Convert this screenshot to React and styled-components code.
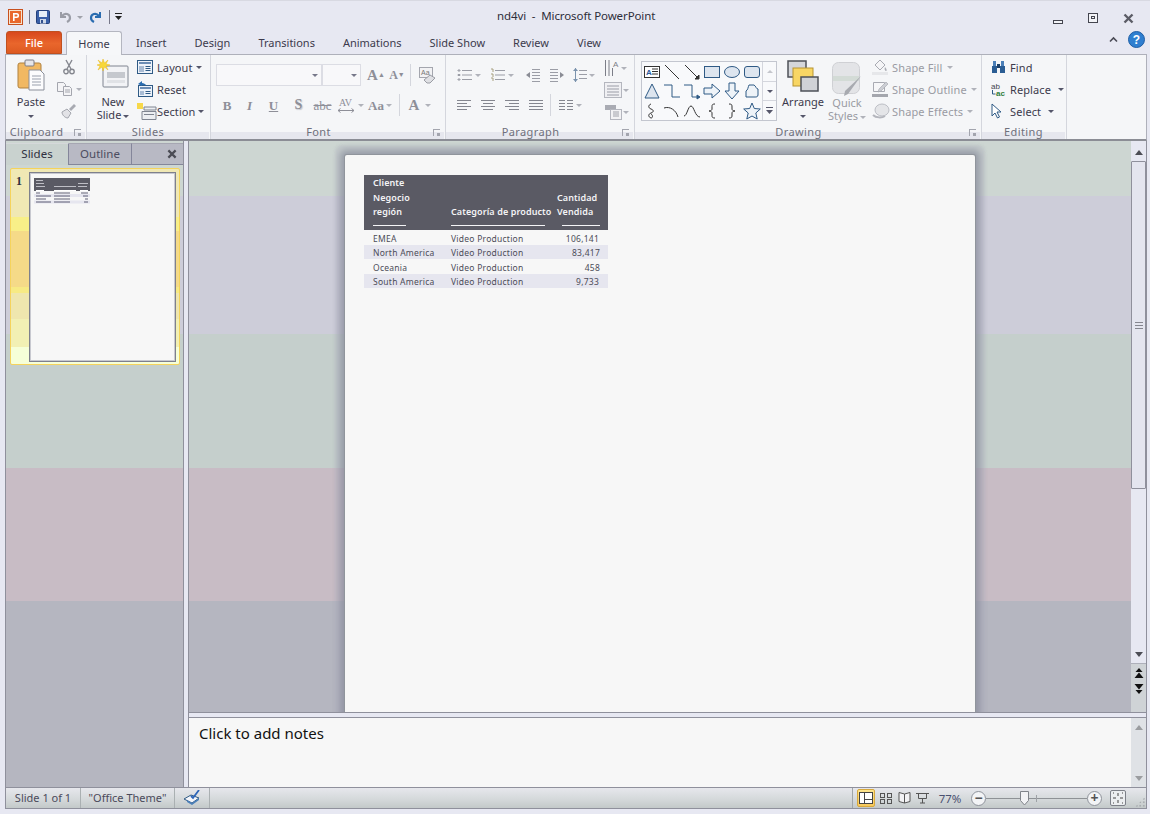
import React from 'react';
import styled, { createGlobalStyle } from 'styled-components';

const Global = createGlobalStyle`
  html, body { margin: 0; padding: 0; background: #e7e8f2; }
  * { box-sizing: border-box; }
`;

const Window = styled.div`
  width: 1150px;
  height: 814px;
  display: flex;
  flex-direction: column;
  overflow: hidden;
  background: #e7e8f2;
  font-family: "Noto Sans", "Open Sans", sans-serif;
  font-size: 11px;
  color: #3c3a4c;
`;

/* title bar */
const TitleBar = styled.div`
  height: 31px;
  display: flex;
  align-items: center;
  padding: 2px 0 0 8px;
  border-top: 1px solid #d8d9e2;
`;
const Quick = styled.div`
  display: flex;
  align-items: center;
  width: 489px;
`;
const QuickSep = styled.span`
  width: 1px;
  height: 14px;
  background: ${p => (p.$clear ? 'transparent' : '#77788a')};
  margin: ${p => p.$m || '0 6px'};
`;
const Title = styled.div`
  font-size: 11.5px;
  letter-spacing: -0.1px;
  color: #2e2e3a;
  width: 180px;
  white-space: pre;
  margin-top: -4px;
`;
const WinButtons = styled.div`
  margin-left: auto;
  display: flex;
  align-items: center;
  padding: 2px 16px 0 0;
  gap: 24px;
`;

/* tabs */
const TabBar = styled.div`
  height: 23px;
  display: flex;
  align-items: flex-end;
  padding-left: 6px;
`;
const FileTab = styled.div`
  width: 56px;
  height: 23px;
  margin-right: 4px;
  border-radius: 3px 3px 0 0;
  background: linear-gradient(#d8481d, #e9662c 55%, #dd5a22);
  border: 1px solid #c0501f;
  color: #fff;
  font-weight: 500;
  display: flex;
  align-items: center;
  justify-content: center;
`;
const Tab = styled.div`
  height: ${p => (p.$active ? '24px' : '23px')};
  width: ${p => (p.$active ? '56px' : 'auto')};
  margin-bottom: ${p => (p.$active ? '-1px' : '0')};
  padding: 0 ${p => (p.$active ? '0' : '14px')};
  display: flex;
  align-items: center;
  justify-content: center;
  white-space: nowrap;
  z-index: 1;
  ${p => p.$active && `
    background: #f6f7f9;
    border: 1px solid #b4b6c0;
    border-bottom: none;
    border-radius: 3px 3px 0 0;
  `}
`;
const TabRight = styled.div`
  margin-left: auto;
  display: flex;
  align-items: center;
  gap: 10px;
  padding: 0 5px 6px 0;
`;

/* ribbon */
const Ribbon = styled.div`
  height: 87px;
  margin: 0 3px 0 5px;
  display: flex;
  background: #f5f6f8;
  border: 1px solid #aeb0ba;
  border-bottom: 2px solid #8b8d95;
`;
const Group = styled.div`
  width: ${p => p.$w}px;
  flex: none;
  display: flex;
  flex-direction: column;
  border-right: 1px solid #d4d6dd;
  position: relative;
`;
const GroupBody = styled.div`
  height: 70px;
  display: flex;
  padding: ${p => p.$pad || '2px 0 0 0'};
`;
const GroupLabel = styled.div`
  height: 14px;
  margin-right: 1px;
  padding-right: ${p => (p.$launcher ? '18px' : '0')};
  background: linear-gradient(transparent 0 7px, #e6e7ee 7px);
  color: #6f707c;
  text-align: center;
  line-height: 14px;
  letter-spacing: 0.4px;
`;
const Launcher = styled.span`
  position: absolute;
  right: 5px;
  bottom: 3px;
  width: 7px;
  height: 7px;
  border-left: 1px solid #a3a5ae;
  border-top: 1px solid #a3a5ae;
  &:after {
    content: '';
    position: absolute;
    right: 0;
    bottom: 0;
    width: 3px;
    height: 3px;
    background: #a3a5ae;
  }
`;
const BigButton = styled.div`
  width: ${p => p.$w}px;
  flex: none;
  display: flex;
  flex-direction: column;
  align-items: center;
  color: ${p => (p.$off ? '#9a9ba3' : 'inherit')};
  margin: ${p => p.$m || '0'};
  line-height: 13px;
  text-align: center;
  svg { margin-bottom: ${p => p.$gap ?? 3}px; }
`;
const Stack = styled.div`
  width: ${p => (p.$w ? `${p.$w}px` : 'auto')};
  flex: none;
  display: flex;
  flex-direction: column;
  align-items: ${p => p.$align || 'flex-start'};
  margin: ${p => p.$m || '0'};
`;
const SmallRow = styled.div`
  height: 22px;
  display: flex;
  align-items: center;
  white-space: nowrap;
  gap: ${p => p.$gap ?? 4}px;
  color: ${p => (p.$off ? '#9a9ba3' : 'inherit')};
  letter-spacing: ${p => (p.$off ? '0.15px' : '0.1px')};
`;
const Caret = styled.span`
  display: inline-block;
  width: 0;
  height: 0;
  margin: 0 ${p => p.$r ?? 0}px 0 ${p => p.$l ?? 2}px;
  border-left: 3px solid transparent;
  border-right: 3px solid transparent;
  border-top: 3px solid ${p => p.$c || '#55566a'};
  vertical-align: middle;
  transform: ${p => (p.$up ? 'rotate(180deg)' : 'none')};
`;
const Rows = styled.div`
  width: ${p => (p.$w ? `${p.$w}px` : 'auto')};
  padding-top: ${p => p.$top ?? 0}px;
  display: flex;
  flex-direction: column;
  gap: ${p => p.$gap ?? 8}px;
`;
const Row = styled.div`
  height: 22px;
  display: flex;
  align-items: center;
  gap: ${p => p.$gap ?? 0}px;
`;
const Combo = styled.div`
  width: ${p => p.$w}px;
  height: 22px;
  border: 1px solid #dcdde4;
  background: #f8f8fa;
  display: flex;
  align-items: center;
  justify-content: flex-end;
  padding-right: 3px;
`;
const Cell = styled.div`
  width: ${p => p.$w}px;
  flex: none;
  display: flex;
  flex-direction: ${p => (p.$col ? 'column' : 'row')};
  align-items: center;
  justify-content: center;
  margin-left: ${p => p.$ml ?? 0}px;
`;
const GlyphText = styled.span`
  font-family: "Liberation Serif", serif;
  font-size: ${p => p.$s || 13}px;
  font-weight: ${p => p.$b || 700};
  font-style: ${p => (p.$i ? 'italic' : 'normal')};
  text-decoration: ${p => p.$d || 'none'};
  text-shadow: ${p => (p.$shadow ? '1px 1px 1px #c4c5cb' : 'none')};
  color: #8e8f98;
  line-height: 1;
`;
const RowSep = styled.span`
  width: 1px;
  height: 22px;
  flex: none;
  background: #d4d6dd;
  margin: ${p => p.$m || '0'};
`;
const Gallery = styled.div`
  margin-top: 4px;
  width: 136px;
  height: 60px;
  flex: none;
  display: flex;
  border: 1px solid #c3c6cf;
  background: #f8f9fb;
`;
const Shapes = styled.div`
  width: 121px;
  display: grid;
  grid-template-columns: repeat(6, 20px);
  grid-auto-rows: 19.5px;
  place-items: center;
`;
const GallerySide = styled.div`
  width: 14px;
  display: flex;
  flex-direction: column;
  border-left: 1px solid #d4d6dd;
`;
const SideBtn = styled.div`
  flex: 1;
  display: flex;
  align-items: center;
  justify-content: center;
  border-bottom: 1px solid #d4d6dd;
  &:last-child { border-bottom: none; }
`;

/* workspace */
const Workspace = styled.div`
  height: 646px;
  margin: 0 3px 0 5px;
  display: flex;
  border-left: 1px solid #8f909c;
  border-right: 1px solid #8f909c;
  background: linear-gradient(
    #cdd6d2 0 55px,
    #cdcdd9 55px 193px,
    #c5cfcc 193px 327px,
    #c8bcc5 327px 460px,
    #b5b6c0 460px
  );
`;
const Pane = styled.div`
  width: 178px;
  flex: none;
  display: flex;
  flex-direction: column;
  border-right: 1px solid #8f909c;
`;
const PaneTabs = styled.div`
  height: 22px;
  margin-top: 2px;
  display: flex;
  font-size: 11.5px;
`;
const PaneTab = styled.div`
  width: 63px;
  display: flex;
  align-items: center;
  justify-content: center;
  padding-bottom: 2px;
  color: ${p => (p.$active ? '#2f3040' : '#4c4d60')};
  background: ${p => (p.$active ? '#c9d2cf' : '#b8b9c4')};
  border-right: 1px solid #84869a;
  border-top: 1px solid ${p => (p.$active ? '#d5d8da' : '#a6a7b2')};
  border-bottom: ${p => (p.$active ? 'none' : '1px solid #84869a')};
`;
const PaneClose = styled.div`
  flex: 1;
  display: flex;
  align-items: center;
  justify-content: flex-end;
  padding-right: 6px;
  background: #b8b9c4;
  border-top: 1px solid #a6a7b2;
  border-bottom: 1px solid #84869a;
`;
const ThumbRow = styled.div`
  margin: 3px 0 0 4px;
  width: 170px;
  height: 197px;
  display: flex;
  padding: 3px 3px 3px 0;
  border: 1px solid #f5d35c;
  border-radius: 2px;
  background: linear-gradient(
    #f0e8b4 0 48px, #f8ef88 48px 62px, #f5da88 62px 118px,
    #f7ea84 118px 124px, #efe6ae 124px 150px, #f2f0b4 150px 178px, #f6ffd8 178px);
`;
const ThumbNum = styled.div`
  width: 18px;
  flex: none;
  padding: 2px 0 0 5px;
  font-family: "Liberation Serif", serif;
  font-weight: 700;
  font-size: 12px;
  color: #2d3040;
`;
const Thumb = styled.div`
  width: 147px;
  height: 190px;
  background: #f7f7f7;
  border: 1px solid #7e808c;
  box-shadow: inset 0 0 0 1px #c8c9d0;
  padding: 5px 0 0 4px;
  svg { display: block; }
`;
const Splitter = styled.div`
  width: 4px;
  flex: none;
  background: #e7e8f2;
`;
const RightCol = styled.div`
  flex: 1;
  min-width: 0;
  display: flex;
  flex-direction: column;
  border-left: 1px solid #8f909c;
`;
const EditRow = styled.div`
  height: 572px;
  display: flex;
  border-bottom: 1px solid #8f909c;
`;
const Stage = styled.div`
  flex: 1;
  min-width: 0;
  overflow: hidden;
  display: flex;
  justify-content: center;
  padding-top: 14px;
`;
const Slide = styled.div`
  width: 630px;
  height: 700px;
  flex: none;
  background: #f7f7f7;
  padding: 20px 0 0 19px;
  border-radius: 2px;
  box-shadow:
    0 0 0 1px #90959c,
    0 0 6px 5px rgba(130, 135, 150, 0.65),
    0 0 3px 10px rgba(175, 175, 190, 0.35);
`;
const DataTable = styled.div`
  width: 244px;
  font-size: 8.5px;
  letter-spacing: 0.25px;
  color: #4c4c58;
`;
const HeadRow = styled.div`
  height: 55px;
  background: #5a5a64;
  color: #f4f4f6;
  font-size: 9px;
  font-weight: 600;
  letter-spacing: 0.1px;
  display: grid;
  grid-template-columns: 87px 106px 51px;
  line-height: 14.5px;
`;
const HeadCell = styled.div`
  display: flex;
  flex-direction: column;
  justify-content: flex-end;
  padding: 0 0 4px ${p => p.$pl ?? 0}px;
  white-space: nowrap;
  &:after {
    content: '';
    display: block;
    height: 1px;
    background: #f4f4f6;
    width: ${p => p.$line}px;
    margin: 5.5px 0 0 ${p => p.$ml ?? 0}px;
  }
`;
const DataRow = styled.div`
  height: 14.5px;
  padding-top: 2px;
  display: grid;
  grid-template-columns: 87px 106px 51px;
  align-items: center;
  white-space: nowrap;
  background: ${p => (p.$alt ? '#e6e6ef' : 'transparent')};
`;
const DataCell = styled.div`
  padding-left: ${p => p.$pl ?? 0}px;
  padding-right: ${p => p.$pr ?? 0}px;
  text-align: ${p => (p.$right ? 'right' : 'left')};
`;
const Scroll = styled.div`
  width: 15px;
  flex: none;
  display: flex;
  flex-direction: column;
  align-items: stretch;
  background: ${p => p.$bg || 'transparent'};
`;
const ArrowBtn = styled.div`
  height: ${p => p.$h}px;
  flex: none;
  padding-top: ${p => p.$top ?? 0}px;
  display: flex;
  align-items: center;
  justify-content: center;
`;
const Tri = styled.span`
  width: 0;
  height: 0;
  border-left: 4px solid transparent;
  border-right: 4px solid transparent;
  ${p => (p.$up ? 'border-bottom' : 'border-top')}: 5px solid ${p => p.$c || '#4c4d55'};
`;
const Track = styled.div`
  flex: 1;
  min-height: 0;
`;
const Thumbbar = styled.div`
  height: 328px;
  background: #e4e5ef;
  border: 1px solid #8f909c;
  border-radius: 1px;
  display: flex;
  align-items: center;
  justify-content: center;
`;
const Grip = styled.span`
  width: 8px;
  height: 7px;
  border-top: 1px solid #85868f;
  border-bottom: 1px solid #85868f;
  position: relative;
  &:after {
    content: '';
    position: absolute;
    left: 0;
    right: 0;
    top: 2px;
    height: 1px;
    background: #85868f;
  }
`;
const NavBtns = styled.div`
  height: 49px;
  flex: none;
  border-top: 1px solid #aeb0ba;
  background: #cfd3d6;
  display: flex;
  flex-direction: column;
  align-items: center;
  padding-top: 4px;
  gap: 6px;
`;
const NotesGap = styled.div`
  height: 4px;
  flex: none;
  background: #e7e8f2;
`;
const Notes = styled.div`
  flex: 1;
  display: flex;
  background: #f7f7f7;
  border-top: 1px solid #8f909c;
`;
const NotesText = styled.div`
  flex: 1;
  padding: 4px 0 0 10px;
  font-size: 15px;
  line-height: 22px;
  color: #111;
`;

/* status bar */
const StatusBar = styled.div`
  height: 22px;
  margin: 0 3px 0 5px;
  display: flex;
  align-items: center;
  background: linear-gradient(#e6e7ec, #d5d9db 55%, #c3c9c9);
  border: 1px solid #8f909c;
  color: #4b4a5a;
  position: relative;
`;
const StatusCell = styled.div`
  height: 100%;
  width: ${p => p.$w}px;
  flex: none;
  display: flex;
  align-items: center;
  justify-content: center;
  padding-bottom: 1px;
  border-right: 1px solid #aab0b2;
`;
const StatusRight = styled.div`
  margin-left: auto;
  height: 100%;
  display: flex;
  align-items: center;
  border-left: 1px solid #9fa5a8;
  padding-left: 4px;
`;
const ViewBtn = styled.div`
  width: 18px;
  height: 18px;
  margin-right: ${p => p.$mr ?? 0}px;
  display: flex;
  align-items: center;
  justify-content: center;
  ${p => p.$active && `
    background: linear-gradient(#fde58e, #f8c95c);
    border: 1px solid #d8a93c;
    border-radius: 2px;
  `}
`;
const Zoom = styled.div`
  width: 38px;
  text-align: center;
  font-size: 11.5px;
  color: #4a5070;
`;
const RoundBtn = styled.div`
  width: 15px;
  height: 15px;
  flex: none;
  margin-left: ${p => p.$ml ?? 0}px;
  border-radius: 50%;
  background: #f3f4f6;
  border: 1px solid #8f939b;
  display: flex;
  align-items: center;
  justify-content: center;
  font-size: 14px;
  line-height: 1;
  font-weight: 700;
  color: #555;
`;
const Slider = styled.div`
  width: 101px;
  height: 15px;
  position: relative;
  &:before {
    content: '';
    position: absolute;
    left: 0;
    right: 0;
    top: 7px;
    height: 1px;
    background: #8e9296;
  }
`;
const SliderTick = styled.span`
  position: absolute;
  left: 50px;
  top: 4px;
  width: 1px;
  height: 7px;
  background: #9ea2a6;
`;
const SliderKnob = styled.svg`
  position: absolute;
  left: 34px;
  top: 0;
`;
const FitBtn = styled.div`
  width: 16px;
  height: 16px;
  margin: 0 20px 0 8px;
  border: 1px solid #7d8088;
  border-radius: 2px;
  background: #eceef0;
  display: flex;
  align-items: center;
  justify-content: center;
`;
const ResizeGrip = styled.div`
  position: absolute;
  right: 1px;
  bottom: 1px;
  width: 10px;
  height: 10px;
  background-image: radial-gradient(#a9adb0 1px, transparent 1.2px);
  background-size: 3.5px 3.5px;
  clip-path: polygon(100% 0, 100% 100%, 0 100%);
`;

const blue = '#2f5a85';
const grey = '#9b9da6';
const softCaret = '#b0b2ba';

const PptLogo = () => (
  <svg width="15" height="16" viewBox="0 0 15 16">
    <rect x=".5" y=".5" width="14" height="15" fill="#f6e3cf" stroke="#c8501e" />
    <rect x="2" y="2" width="11" height="12" fill="#e9682c" />
    <path d="M5 4h3.600a2.400 2.400 0 0 1 0 5H6.600v3H5z M6.600 5.400v2.200h1.800a1.100 1.100 0 0 0 0-2.200z" fill="#fff" fillRule="evenodd" />
  </svg>
);
const SaveIcon = () => (
  <svg width="14" height="14" viewBox="0 0 14 14">
    <rect x=".5" y=".5" width="13" height="13" rx="1" fill="#3a5fa8" stroke="#24407c" />
    <rect x="3" y="1" width="8" height="6" fill="#e6eef8" />
    <rect x="4" y="9" width="6" height="4.500" fill="#cfd8e8" />
    <rect x="5" y="10" width="2" height="3" fill="#33508e" />
  </svg>
);
const UndoIcon = () => (
  <svg width="13" height="14" viewBox="0 0 13 14" fill="none">
    <path d="M2 2v5h5" stroke="#9a9ca6" strokeWidth="2" />
    <path d="M3 6c3-4 8-2 8 2 0 2-1 3-3 4" stroke="#9a9ca6" strokeWidth="2.200" />
  </svg>
);
const RedoIcon = () => (
  <svg width="13" height="14" viewBox="0 0 13 14" fill="none">
    <path d="M11 2v5H6" stroke="#2a6cb0" strokeWidth="2" />
    <path d="M10 6C7 2 2 4 2 8c0 2 1 3 3 4" stroke="#2a6cb0" strokeWidth="2.200" />
  </svg>
);
const Customize = ({ c = '#222' }) => (
  <svg width="8" height="8" viewBox="0 0 8 8">
    <rect y="0" width="7" height="1" fill={c} />
    <path d="M0 3h7L3.500 7z" fill={c} />
  </svg>
);
const MinIcon = () => (
  <svg width="11" height="11" viewBox="0 0 11 11"><rect x=".5" y="7.500" width="9" height="3" fill="#f2f3f7" stroke="#44454f" /></svg>
);
const MaxIcon = () => (
  <svg width="11" height="11" viewBox="0 0 11 11" fill="#f2f3f7" stroke="#44454f"><rect x=".5" y=".5" width="9" height="9" /><rect x="3.500" y="3.500" width="3" height="2" /></svg>
);
const CloseIcon = ({ c = '#5b5c66', size = 11 }) => (
  <svg width={size} height={size} viewBox="0 0 11 11">
    <path d="M1.500 1.500l8 8M9.500 1.500l-8 8" stroke={c} strokeWidth="2.400" />
  </svg>
);
const Chevron = () => (
  <svg width="9" height="7" viewBox="0 0 9 7" fill="none">
    <path d="M1 5.500L4.500 2 8 5.500" stroke="#4a4a55" strokeWidth="1.600" />
  </svg>
);
const HelpIcon = () => (
  <svg width="17" height="17" viewBox="0 0 17 17">
    <circle cx="8.500" cy="8.500" r="8" fill="#2f7fd0" stroke="#1f5ea4" />
    <text x="8.500" y="13" textAnchor="middle" fontSize="12" fontWeight="700" fill="#fff" fontFamily="Liberation Sans">?</text>
  </svg>
);
const PasteIcon = () => (
  <svg width="28" height="32" viewBox="0 0 28 32">
    <rect x="1" y="4" width="23" height="25" rx="2" fill="#f1b862" stroke="#b0813f" />
    <rect x="8" y="1" width="9" height="6" rx="1" fill="#e6e6ea" stroke="#7c7c86" />
    <path d="M12 11h11l4 4v16H12z" fill="#fcfcfd" stroke="#8b8f9a" />
    <path d="M15 17h9M15 20h9M15 23h9M15 26h9" stroke="#9aa0ad" />
  </svg>
);
const CutIcon = () => (
  <svg width="12" height="16" viewBox="0 0 12 16" fill="none" stroke="#85878f" strokeWidth="1.400">
    <path d="M3 1l5 9M9 1L4 10" />
    <circle cx="3" cy="12.500" r="2.200" />
    <circle cx="9" cy="12.500" r="2.200" />
  </svg>
);
const CopyIcon = () => (
  <svg width="16" height="14" viewBox="0 0 16 14" fill="#f4f4f6" stroke="#a4a6ae">
    <path d="M.5.5h6l2 2v7h-8z" />
    <path d="M6.500 4.500h6l2 2v7h-8z" />
    <path d="M8 8h5M8 10h5" />
  </svg>
);
const BrushIcon = () => (
  <svg width="16" height="16" viewBox="0 0 16 16">
    <path d="M1 9l5-3 4 4-3 5C4 15 1 12 1 9z" fill="#e2e2e6" stroke="#a4a6ae" />
    <path d="M8 6l5-5 2 2-5 5z" fill="#a8aab2" />
  </svg>
);
const NewSlideIcon = () => (
  <svg width="32" height="32" viewBox="0 0 32 32">
    <rect x="6" y="7" width="25" height="21" rx="1" fill="#f2f3f6" stroke="#7f8490" />
    <rect x="10" y="13" width="18" height="6" fill="#c5c8ce" />
    <rect x="10" y="21" width="18" height="3" fill="#e0e2e6" />
    <path d="M6 0l1.500 4L11 1 9 5l4 1-4 1 2 4-3.500-3L6 12 5 8l-4 3 2-4-3-1 3.500-1L1 1l4 3z" fill="#f8d838" stroke="#e8b820" strokeWidth=".5" />
  </svg>
);
const LayoutIcon = () => (
  <svg width="16" height="15" viewBox="0 0 16 15">
    <rect x=".5" y=".5" width="15" height="13" fill="#eef3fa" stroke="#2f5a85" />
    <rect x="2" y="2" width="12" height="2" fill="#6c8db5" />
    <path d="M2 6h5v6H2z" fill="#a9bcd4" />
    <path d="M8.500 6.500h5M8.500 8.500h5M8.500 10.500h5" stroke="#2f5a85" />
  </svg>
);
const ResetIcon = () => (
  <svg width="16" height="16" viewBox="0 0 16 16">
    <rect x="1.500" y="4.500" width="14" height="11" fill="#eef3fa" stroke="#2f5a85" />
    <path d="M3 7h11" stroke="#6c8db5" strokeWidth="2" />
    <path d="M3 10h4v4H3z" fill="#a9bcd4" />
    <path d="M8.500 10.500h5M8.500 12.500h5" stroke="#2f5a85" />
    <path d="M1 3l4-3v2c2 0 3 1 4 2H5v1z" fill="#2a6cb0" />
  </svg>
);
const SectionIcon = () => (
  <svg width="20" height="18" viewBox="0 0 20 18">
    <rect x="0" y="1" width="6" height="6" fill="#f7d84a" />
    <path d="M7 5h12v3H7zM5 9.500h14v8H5z" fill="#eceef2" stroke="#7f8490" />
    <path d="M7 12.500h10" stroke="#7f8490" />
  </svg>
);
const ClearFormatIcon = () => (
  <svg width="17" height="17" viewBox="0 0 17 17">
    <rect x=".5" y=".5" width="13" height="10" fill="#f2f2f4" stroke="#a4a6ae" />
    <text x="2" y="8" fontSize="7" fill="#777" fontFamily="Liberation Sans">Aa</text>
    <path d="M5 13l6-5 5 3-5 5H8z" fill="#dfe0e4" stroke="#9a9ca4" />
  </svg>
);
const KernArrow = () => (
  <svg width="18" height="5" viewBox="0 0 18 5" fill="none" stroke="#8e8f98">
    <path d="M1 2.500h16M3.500 .5l-2.500 2 2.500 2M14.500 .5l2.500 2-2.500 2" />
  </svg>
);
const BulletsIcon = ({ numbered }) => (
  <svg width="15" height="14" viewBox="0 0 15 14" fill="none" stroke={grey}>
    <path d="M5 2.500h10M5 7h10M5 11.500h10" />
    <path d={numbered ? 'M1 1h2v3M1 6h2v3M1 10h2v3' : 'M1 2h2v1H1zM1 6.500h2v1H1zM1 11h2v1H1z'} stroke={numbered ? '#a8a080' : grey} />
  </svg>
);
const IndentIcon = ({ flip }) => (
  <svg width="16" height="14" viewBox="0 0 16 14" fill="none" stroke={grey} style={{ transform: flip ? 'scaleX(-1)' : 'none' }}>
    <path d="M7 1.500h8M7 4.500h8M7 7.500h8M7 10.500h8M7 13.500h8" />
    <path d="M5 4v6L1 7z" fill="#8a8c95" stroke="none" />
  </svg>
);
const SpacingIcon = () => (
  <svg width="14" height="16" viewBox="0 0 14 16" fill="none" stroke={grey}>
    <path d="M6 3.500h8M6 7.500h8M6 11.500h8" />
    <path d="M2.500 1v14" stroke="#7b93ad" />
    <path d="M0 4l2.500-3L5 4zM0 12l2.500 3L5 12z" fill="#7b93ad" stroke="none" />
  </svg>
);
const AlignIcon = ({ d }) => (
  <svg width="14" height="12" viewBox="0 0 14 12" fill="none" stroke="#84868f"><path d={d} /></svg>
);
const ColumnsIcon = () => (
  <svg width="14" height="12" viewBox="0 0 14 12" fill="none" stroke="#84868f">
    <path d="M0 1.500h6M0 4.500h6M0 7.500h6M0 10.500h6M8 1.500h6M8 4.500h6M8 7.500h6M8 10.500h6" />
  </svg>
);
const TextDirIcon = () => (
  <svg width="16" height="18" viewBox="0 0 16 18" fill="none" stroke="#7c7e88">
    <path d="M1.500 1v16M5 1v16M8.500 9v8" />
    <text x="9" y="8" fontSize="8" fill="#7c7e88" stroke="none" fontFamily="Liberation Sans">A</text>
  </svg>
);
const AlignTextIcon = () => (
  <svg width="18" height="16" viewBox="0 0 18 16">
    <rect x=".5" y=".5" width="17" height="15" fill="#f0f0f3" stroke="#b4b6be" />
    <path d="M3 4h12M3 7h12M3 10h12M3 13h12" stroke="#9a9ca6" />
  </svg>
);
const SmartArtIcon = () => (
  <svg width="18" height="16" viewBox="0 0 18 16">
    <path d="M1 1h11v5H1z" fill="#a9abb3" />
    <rect x="6.500" y="5.500" width="11" height="10" fill="#f2f2f4" stroke="#b4b6be" />
    <path d="M9 8h6M9 10h6M9 12h6" stroke="#a0a2aa" />
  </svg>
);
const ArrangeIcon = () => (
  <svg width="32" height="32" viewBox="0 0 32 32">
    <rect x="1" y="1" width="18" height="16" fill="#d4d6da" stroke="#4e5158" strokeWidth="1.500" />
    <rect x="6" y="8" width="20" height="18" fill="#f8d664" stroke="#b89430" />
    <rect x="14" y="17" width="17" height="14" fill="#d0d2d6" stroke="#4e5158" strokeWidth="1.500" />
  </svg>
);
const QuickStylesIcon = () => (
  <svg width="30" height="34" viewBox="0 0 30 34">
    <rect x=".5" y=".5" width="27" height="31" rx="6" fill="#e3e4e7" stroke="#cfd0d4" />
    <path d="M1 14h26v5H1z" fill="#d3dbd6" />
    <path d="M29 14L16 32l-4 2 1-5z" fill="#a8aab0" />
  </svg>
);
const FillIcon = () => (
  <svg width="18" height="16" viewBox="0 0 18 16">
    <path d="M3 6l5-5 5 5-5 5z" fill="#f4f4f6" stroke="#a8aab2" />
    <path d="M13 8c2 2 2 4 1 4s-2-2-1-4z" fill="#a8aab2" />
    <rect y="13" width="16" height="3" fill="#e6e7ea" />
  </svg>
);
const OutlineIcon = () => (
  <svg width="18" height="16" viewBox="0 0 18 16">
    <path d="M1.500 1.500h11v9h-11z" fill="#f6f6f8" stroke="#a8aab2" />
    <path d="M7 8l7-7 2 2-7 7-3 1z" fill="#ccced4" stroke="#a0a2aa" strokeWidth=".6" />
    <rect y="13" width="16" height="3" fill="#a4a6ad" />
  </svg>
);
const EffectsIcon = () => (
  <svg width="18" height="16" viewBox="0 0 18 16">
    <ellipse cx="10" cy="7" rx="7" ry="6" fill="#e4e5e8" stroke="#bcbec5" />
    <path d="M1 12c3 3 9 3 12 1" stroke="#b4b6bd" strokeWidth="2" fill="none" />
  </svg>
);
const FindIcon = () => (
  <svg width="15" height="14" viewBox="0 0 15 14" fill="#2b5d94">
    <path d="M1 6h5v7H1zM9 6h5v7H9z" />
    <path d="M2 1h3v5H2zM10 1h3v5h-3z" fill="#4b7fb8" />
    <rect x="6" y="4" width="3" height="4" fill="#1d3f66" />
  </svg>
);
const ReplaceIcon = () => (
  <svg width="15" height="15" viewBox="0 0 15 15">
    <text x="0" y="7" fontSize="8" fill="#44454f" fontFamily="Liberation Sans">ab</text>
    <text x="5" y="14" fontSize="8" fontWeight="700" fill="#2f7d3a" fontFamily="Liberation Sans">ac</text>
    <path d="M1.500 8v4h3" fill="none" stroke="#2f5a85" />
  </svg>
);
const SelectIcon = () => (
  <svg width="12" height="16" viewBox="0 0 12 16">
    <path d="M1 1v12l3-3 2.500 5 2-1L6 9h4z" fill="#fff" stroke="#2f5a85" />
  </svg>
);
const SpellIcon = () => (
  <svg width="18" height="15" viewBox="0 0 18 15">
    <path d="M1 9l7-4 8 3-7 5z" fill="#f3f5fa" stroke="#2f5a85" />
    <path d="M4 10l5 3 7-5v2l-7 5-5-3z" fill="#4b7fb8" />
    <path d="M8 6l2 2 6-8" fill="none" stroke="#2b64b8" strokeWidth="1.800" />
  </svg>
);
const JumpIcon = ({ down }) => (
  <svg width="10" height="10" viewBox="0 0 10 10" style={{ transform: down ? 'scaleY(-1)' : 'none' }}>
    <path d="M5 0l3.500 4h-7zM5 4.500L9.500 10H.5z" fill="#111" />
  </svg>
);

const shape = { fill: '#dde5ef', stroke: blue };
const Sh = ({ children }) => (
  <svg width="18" height="18" viewBox="0 0 18 18" fill="none" stroke={blue}>{children}</svg>
);
const shapes = [
  <Sh><rect x="1.500" y="3.500" width="15" height="11" fill="#fff" stroke="#333" /><text x="3" y="12" fontSize="8" fontWeight="700" fill="#2a5a9a" stroke="none" fontFamily="Liberation Sans">A</text><path d="M9 6h6M9 8.500h6M9 11h6" stroke="#333" /></Sh>,
  <Sh><path d="M2 2l14 14" stroke="#333" /></Sh>,
  <Sh><path d="M2 2l14 14" stroke="#333" /><path d="M16 16v-4l-4 4z" fill="#333" stroke="#333" /></Sh>,
  <Sh><rect x="1.500" y="3.500" width="15" height="11" {...shape} /></Sh>,
  <Sh><ellipse cx="9" cy="9" rx="7.500" ry="5.500" {...shape} /></Sh>,
  <Sh><rect x="1.500" y="3.500" width="15" height="11" rx="2.500" {...shape} /></Sh>,
  <Sh><path d="M9 2l7 14H2z" {...shape} /></Sh>,
  <Sh><path d="M1 3h8v12h8" /></Sh>,
  <Sh><path d="M1 3h8v12h7" /><path d="M14 13l3 2-3 2z" fill={blue} /></Sh>,
  <Sh><path d="M1 6h8V2l8 7-8 7v-4H1z" fill="#eef3f8" /></Sh>,
  <Sh><path d="M6 1h6v8h4l-7 8-7-8h4z" fill="#eef3f8" /></Sh>,
  <Sh><path d="M6 3h5c2 1 2 4 4 4v6c0 2-2 2-3 2H3V9c2-1 2-4 3-6z" fill="#eef3f8" /></Sh>,
  <Sh><path d="M8 2C5 3 5 6 8 7s3 3 0 4-3 4 0 5c2 0 2-3 0-4" stroke="#333" /></Sh>,
  <Sh><path d="M1 6c6-2 12 2 14 9" stroke="#333" /></Sh>,
  <Sh><path d="M1 14C4 14 5 4 8 4s4 11 9 11" stroke="#333" /></Sh>,
  <Sh><path d="M12 2c-3 0-3 1-3 3v2c0 1-1 2-3 2 2 0 3 1 3 2v2c0 2 0 3 3 3" stroke="#333" /></Sh>,
  <Sh><path d="M6 2c3 0 3 1 3 3v2c0 1 1 2 3 2-2 0-3 1-3 2v2c0 2 0 3-3 3" stroke="#333" /></Sh>,
  <Sh><path d="M9 1l2.300 5.500 6 .5-4.500 4 1.400 6L9 14l-5.200 3 1.400-6L.7 7l6-.5z" fill="#eef3f8" /></Sh>,
];

const App = () => (
  <Window>
    <Global />
    <TitleBar>
      <Quick>
        <PptLogo />
        <QuickSep />
        <SaveIcon />
        <QuickSep $m="0 4px" $clear />
        <UndoIcon />
        <Caret $l={5} $r={6} $c="#a0a2aa" />
        <RedoIcon />
        <QuickSep $m="0 5px 0 7px" />
        <Customize />
      </Quick>
      <Title>nd4vi  -  Microsoft PowerPoint</Title>
      <WinButtons>
        <MinIcon />
        <MaxIcon />
        <CloseIcon />
      </WinButtons>
    </TitleBar>

    <TabBar>
      <FileTab>File</FileTab>
      <Tab $active>Home</Tab>
      <Tab>Insert</Tab>
      <Tab>Design</Tab>
      <Tab>Transitions</Tab>
      <Tab>Animations</Tab>
      <Tab>Slide Show</Tab>
      <Tab>Review</Tab>
      <Tab>View</Tab>
      <TabRight>
        <Chevron />
        <HelpIcon />
      </TabRight>
    </TabBar>

    <Ribbon>
      <Group $w={81}>
        <GroupBody $pad="4px 0 0 10px">
          <BigButton $w={30} $gap={4}>
            <PasteIcon />
            Paste
            <div><Caret $l={0} /></div>
          </BigButton>
          <Stack $w={36} $align="center" $m="-3px 0 0 5px">
            <SmallRow><CutIcon /></SmallRow>
            <SmallRow $gap={2}><CopyIcon /><Caret $c={softCaret} $l={1} /></SmallRow>
            <SmallRow><BrushIcon /></SmallRow>
          </Stack>
        </GroupBody>
        <GroupLabel $launcher>Clipboard</GroupLabel>
        <Launcher />
      </Group>

      <Group $w={124}>
        <GroupBody $pad="4px 0 0 2px">
          <BigButton $w={48} $gap={4}>
            <NewSlideIcon />
            New
            <div>Slide<Caret /></div>
          </BigButton>
          <Stack $m="-3px 0 0 0">
            <SmallRow><LayoutIcon />Layout<Caret $l={-1} /></SmallRow>
            <SmallRow><ResetIcon />Reset</SmallRow>
            <SmallRow $gap={0}><SectionIcon />Section<Caret /></SmallRow>
          </Stack>
        </GroupBody>
        <GroupLabel>Slides</GroupLabel>
      </Group>

      <Group $w={235}>
        <GroupBody $pad="9px 0 0 5px">
          <Rows>
            <Row>
              <Combo $w={106}><Caret $c="#77788a" /></Combo>
              <Combo $w={39}><Caret $c="#77788a" /></Combo>
              <Cell $w={22} $ml={4}><GlyphText $s={15}>A</GlyphText><GlyphText $s={7}>▲</GlyphText></Cell>
              <Cell $w={20}><GlyphText $s={12}>A</GlyphText><GlyphText $s={7}>▼</GlyphText></Cell>
              <RowSep $m="0 8px 0 3px" />
              <ClearFormatIcon />
            </Row>
            <Row>
              <Cell $w={22}><GlyphText>B</GlyphText></Cell>
              <Cell $w={23}><GlyphText $i>I</GlyphText></Cell>
              <Cell $w={25}><GlyphText $d="underline">U</GlyphText></Cell>
              <Cell $w={25}><GlyphText $s={14} $shadow>S</GlyphText></Cell>
              <Cell $w={23}><GlyphText $b={400} $d="line-through">abc</GlyphText></Cell>
              <Cell $w={31}>
                <Cell $w={20} $col><GlyphText $s={10} $b={400}>AV</GlyphText><KernArrow /></Cell>
                <Caret $c={softCaret} />
              </Cell>
              <Cell $w={30}><GlyphText>Aa</GlyphText><Caret $c={softCaret} /></Cell>
              <RowSep $m="0 8px 0 4px" />
              <Cell $w={24}><GlyphText $s={15}>A</GlyphText><Caret $l={6} $c={softCaret} /></Cell>
            </Row>
          </Rows>
        </GroupBody>
        <GroupLabel $launcher>Font</GroupLabel>
        <Launcher />
      </Group>

      <Group $w={189}>
        <GroupBody $pad="2px 0 0 11px">
          <Rows $w={147} $top={7}>
            <Row>
              <Cell $w={24}><BulletsIcon /><Caret $l={3} $c={softCaret} /></Cell>
              <Cell $w={28} $ml={7}><BulletsIcon numbered /><Caret $l={3} $c={softCaret} /></Cell>
              <Cell $w={24} $ml={5}><IndentIcon /></Cell>
              <Cell $w={24}><IndentIcon flip /></Cell>
              <Cell $w={26} $ml={2}><SpacingIcon /><Caret $c={softCaret} /></Cell>
            </Row>
            <Row $gap={10}>
              <AlignIcon d="M0 1.500h14M0 4.500h10M0 7.500h14M0 10.500h10" />
              <AlignIcon d="M0 1.500h14M2 4.500h10M0 7.500h14M2 10.500h10" />
              <AlignIcon d="M0 1.500h14M4 4.500h10M0 7.500h14M4 10.500h10" />
              <AlignIcon d="M0 1.500h14M0 4.500h14M0 7.500h14M0 10.500h14" />
              <RowSep $m="0 -3px 0 -3px" />
              <Cell $w={24}><ColumnsIcon /><Caret $l={3} $c={softCaret} /></Cell>
            </Row>
          </Rows>
          <Stack>
            <SmallRow $gap={1}><TextDirIcon /><Caret $c={softCaret} $l={0} /></SmallRow>
            <SmallRow $gap={1}><AlignTextIcon /><Caret $c={softCaret} $l={0} /></SmallRow>
            <SmallRow $gap={1}><SmartArtIcon /><Caret $c={softCaret} $l={0} /></SmallRow>
          </Stack>
        </GroupBody>
        <GroupLabel $launcher>Paragraph</GroupLabel>
        <Launcher />
      </Group>

      <Group $w={347}>
        <GroupBody $pad="2px 0 0 6px">
          <Gallery>
            <Shapes>{shapes.map((s, i) => <React.Fragment key={i}>{s}</React.Fragment>)}</Shapes>
            <GallerySide>
              <SideBtn><Caret $l={0} $c="#c4c6cc" $up /></SideBtn>
              <SideBtn><Caret $l={0} /></SideBtn>
              <SideBtn><Customize c="#55566a" /></SideBtn>
            </GallerySide>
          </Gallery>
          <BigButton $w={42} $gap={3} $m="3px 0 0 5px">
            <ArrangeIcon />
            Arrange
            <div><Caret $l={0} /></div>
          </BigButton>
          <BigButton $w={46} $off $gap={0} $m="5px 0 0 0">
            <QuickStylesIcon />
            Quick
            <div>Styles<Caret $c={softCaret} /></div>
          </BigButton>
          <Stack $m="-1px 0 0 2px">
            <SmallRow $off $gap={2}><FillIcon />Shape Fill<Caret $c={softCaret} /></SmallRow>
            <SmallRow $off $gap={2}><OutlineIcon />Shape Outline<Caret $c={softCaret} /></SmallRow>
            <SmallRow $off $gap={2}><EffectsIcon />Shape Effects<Caret $c={softCaret} /></SmallRow>
          </Stack>
        </GroupBody>
        <GroupLabel $launcher>Drawing</GroupLabel>
        <Launcher />
      </Group>

      <Group $w={85}>
        <GroupBody $pad="2px 0 0 9px">
          <Stack $m="-1px 0 0 0">
            <SmallRow><FindIcon />Find</SmallRow>
            <SmallRow><ReplaceIcon />Replace<Caret $l={3} /></SmallRow>
            <SmallRow $gap={7}><SelectIcon />Select<Caret $l={0} /></SmallRow>
          </Stack>
        </GroupBody>
        <GroupLabel>Editing</GroupLabel>
      </Group>
    </Ribbon>

    <Workspace>
      <Pane>
        <PaneTabs>
          <PaneTab $active>Slides</PaneTab>
          <PaneTab>Outline</PaneTab>
          <PaneClose><CloseIcon c="#4b4c55" size={10} /></PaneClose>
        </PaneTabs>
        <ThumbRow>
          <ThumbNum>1</ThumbNum>
          <Thumb>
            <svg width="56" height="27" viewBox="0 0 56 27">
              <rect width="56" height="13" fill="#5a5a64" />
              <path d="M2 2.500h7M2 5.500h8M2 8.500h9M20 8.500h22M44 5.500h10M44 8.500h9" stroke="#d8d8de" strokeWidth=".8" />
              <path d="M2 12.500h8M20 12.500h22M46 12.500h8" stroke="#fff" />
              <rect y="16" width="56" height="3" fill="#e6e6ef" />
              <rect y="22.500" width="56" height="3" fill="#e6e6ef" />
              <path d="M2 15h4M20 15h16M47 15h7M2 18h15M20 18h16M49 18h5M2 21h10M20 21h16M51 21h3M2 24h15M20 24h16M50 24h4" stroke="#4f4f68" strokeWidth=".9" />
            </svg>
          </Thumb>
        </ThumbRow>
      </Pane>
      <Splitter />
      <RightCol>
        <EditRow>
          <Stage>
            <Slide>
              <DataTable>
                <HeadRow>
                  <HeadCell $pl={9} $line={33}><span>Cliente</span><span>Negocio</span><span>región</span></HeadCell>
                  <HeadCell $line={94}><span>Categoría de producto</span></HeadCell>
                  <HeadCell $line={38} $ml={5}><span>Cantidad</span><span>Vendida</span></HeadCell>
                </HeadRow>
                <DataRow><DataCell $pl={9}>EMEA</DataCell><DataCell>Video Production</DataCell><DataCell $right $pr={9}>106,141</DataCell></DataRow>
                <DataRow $alt><DataCell $pl={9}>North America</DataCell><DataCell>Video Production</DataCell><DataCell $right $pr={8}>83,417</DataCell></DataRow>
                <DataRow><DataCell $pl={9}>Oceania</DataCell><DataCell>Video Production</DataCell><DataCell $right $pr={8}>458</DataCell></DataRow>
                <DataRow $alt><DataCell $pl={9}>South America</DataCell><DataCell>Video Production</DataCell><DataCell $right $pr={9}>9,733</DataCell></DataRow>
              </DataTable>
            </Slide>
          </Stage>
          <Scroll $bg="#e7e8f2">
            <ArrowBtn $h={20} $top={2}><Tri $up /></ArrowBtn>
            <Thumbbar><Grip /></Thumbbar>
            <Track />
            <ArrowBtn $h={18}><Tri /></ArrowBtn>
            <NavBtns>
              <JumpIcon />
              <JumpIcon down />
            </NavBtns>
          </Scroll>
        </EditRow>
        <NotesGap />
        <Notes>
          <NotesText>Click to add notes</NotesText>
          <Scroll $bg="#dfe2e6">
            <ArrowBtn $h={18}><Tri $up $c="#9b9da0" /></ArrowBtn>
            <Track />
            <ArrowBtn $h={18}><Tri $c="#9b9da0" /></ArrowBtn>
          </Scroll>
        </Notes>
      </RightCol>
    </Workspace>

    <StatusBar>
      <StatusCell $w={75}>Slide 1 of 1</StatusCell>
      <StatusCell $w={94}>"Office Theme"</StatusCell>
      <StatusCell $w={35}><SpellIcon /></StatusCell>
      <StatusRight>
        <ViewBtn $active $mr={2}>
          <svg width="14" height="12" viewBox="0 0 14 12"><rect x=".5" y=".5" width="13" height="11" fill="#fff" stroke="#444" /><path d="M5.500 1v10M6 7.500h7" stroke="#444" /></svg>
        </ViewBtn>
        <ViewBtn>
          <svg width="12" height="11" viewBox="0 0 12 11" fill="none" stroke="#555"><rect x=".5" y=".5" width="4" height="4" /><rect x="7.500" y=".5" width="4" height="4" /><rect x=".5" y="6.500" width="4" height="4" /><rect x="7.500" y="6.500" width="4" height="4" /></svg>
        </ViewBtn>
        <ViewBtn>
          <svg width="13" height="12" viewBox="0 0 13 12" fill="#f2f2f4" stroke="#555"><path d="M6.500 2L1 .5v9L6.500 11 12 9.500v-9zM6.500 2v9" /></svg>
        </ViewBtn>
        <ViewBtn>
          <svg width="13" height="12" viewBox="0 0 13 12" fill="none" stroke="#555"><path d="M0 1.500h13M2.500 2v4.500h8V2M6.500 7v4M4 11h5" /></svg>
        </ViewBtn>
        <Zoom>77%</Zoom>
        <RoundBtn $ml={2}>−</RoundBtn>
        <Slider>
          <SliderTick />
          <SliderKnob width="9" height="15" viewBox="0 0 9 15">
            <path d="M.5.5h8v9l-4 4.500-4-4.500z" fill="#f2f3f5" stroke="#80848a" />
          </SliderKnob>
        </Slider>
        <RoundBtn>+</RoundBtn>
        <FitBtn>
          <svg width="12" height="12" viewBox="0 0 12 12" fill="none" stroke="#444"><path d="M6 1v3M6 8v3M1 6h3M8 6h3" /><path d="M1 1h1M10 1h1M1 11h1M10 11h1" /></svg>
        </FitBtn>
      </StatusRight>
      <ResizeGrip />
    </StatusBar>
  </Window>
);

export default App;
